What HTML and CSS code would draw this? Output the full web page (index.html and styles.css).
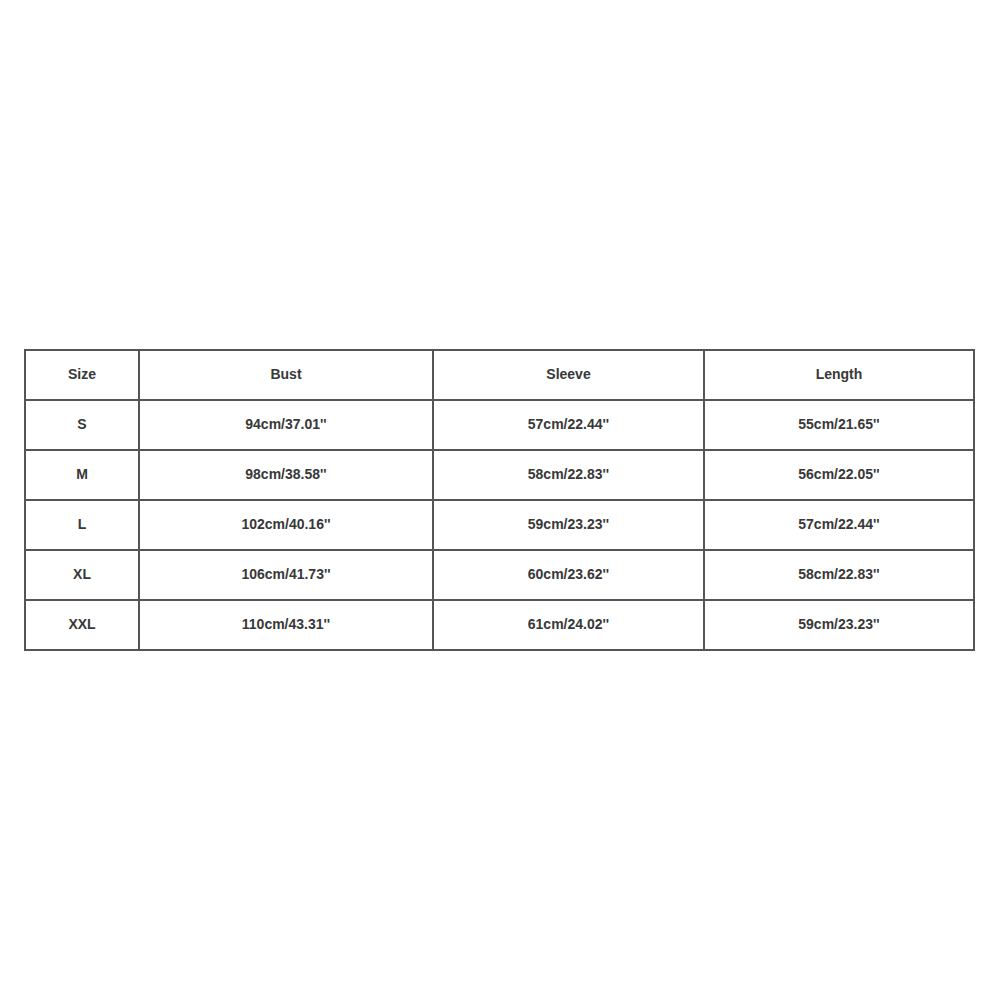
FILE: index.html
```html
<!DOCTYPE html>
<html>
<head>
<meta charset="utf-8">
<link rel="stylesheet" href="styles.css">
</head>
<body>
<div class="page">
<table class="sizes">
<colgroup>
<col class="c1"><col class="c2"><col class="c3"><col class="c4">
</colgroup>
<tr><td>Size</td><td>Bust</td><td>Sleeve</td><td>Length</td></tr>
<tr><td>S</td><td>94cm/37.01''</td><td>57cm/22.44''</td><td>55cm/21.65''</td></tr>
<tr><td>M</td><td>98cm/38.58''</td><td>58cm/22.83''</td><td>56cm/22.05''</td></tr>
<tr><td>L</td><td>102cm/40.16''</td><td>59cm/23.23''</td><td>57cm/22.44''</td></tr>
<tr><td>XL</td><td>106cm/41.73''</td><td>60cm/23.62''</td><td>58cm/22.83''</td></tr>
<tr><td>XXL</td><td>110cm/43.31''</td><td>61cm/24.02''</td><td>59cm/23.23''</td></tr>
</table>
</div>
</body>
</html>
```
FILE: styles.css
```css
html, body {
  margin: 0;
  padding: 0;
  background: #fff;
}
.page {
  width: 1000px;
  height: 1000px;
  padding: 349px 0 0 24px;
  box-sizing: border-box;
}
.sizes {
  border-collapse: collapse;
  table-layout: fixed;
  width: 949px;
  font-family: "Liberation Sans", Arial, sans-serif;
  font-weight: bold;
  font-size: 14px;
  color: #383838;
}
.c1 { width: 114px; }
.c2 { width: 294px; }
.c3 { width: 271px; }
.c4 { width: 270px; }
.sizes td {
  border: 2px solid #555;
  height: 46px;
  padding: 0 0 2px;
  text-align: center;
  vertical-align: middle;
}
```
